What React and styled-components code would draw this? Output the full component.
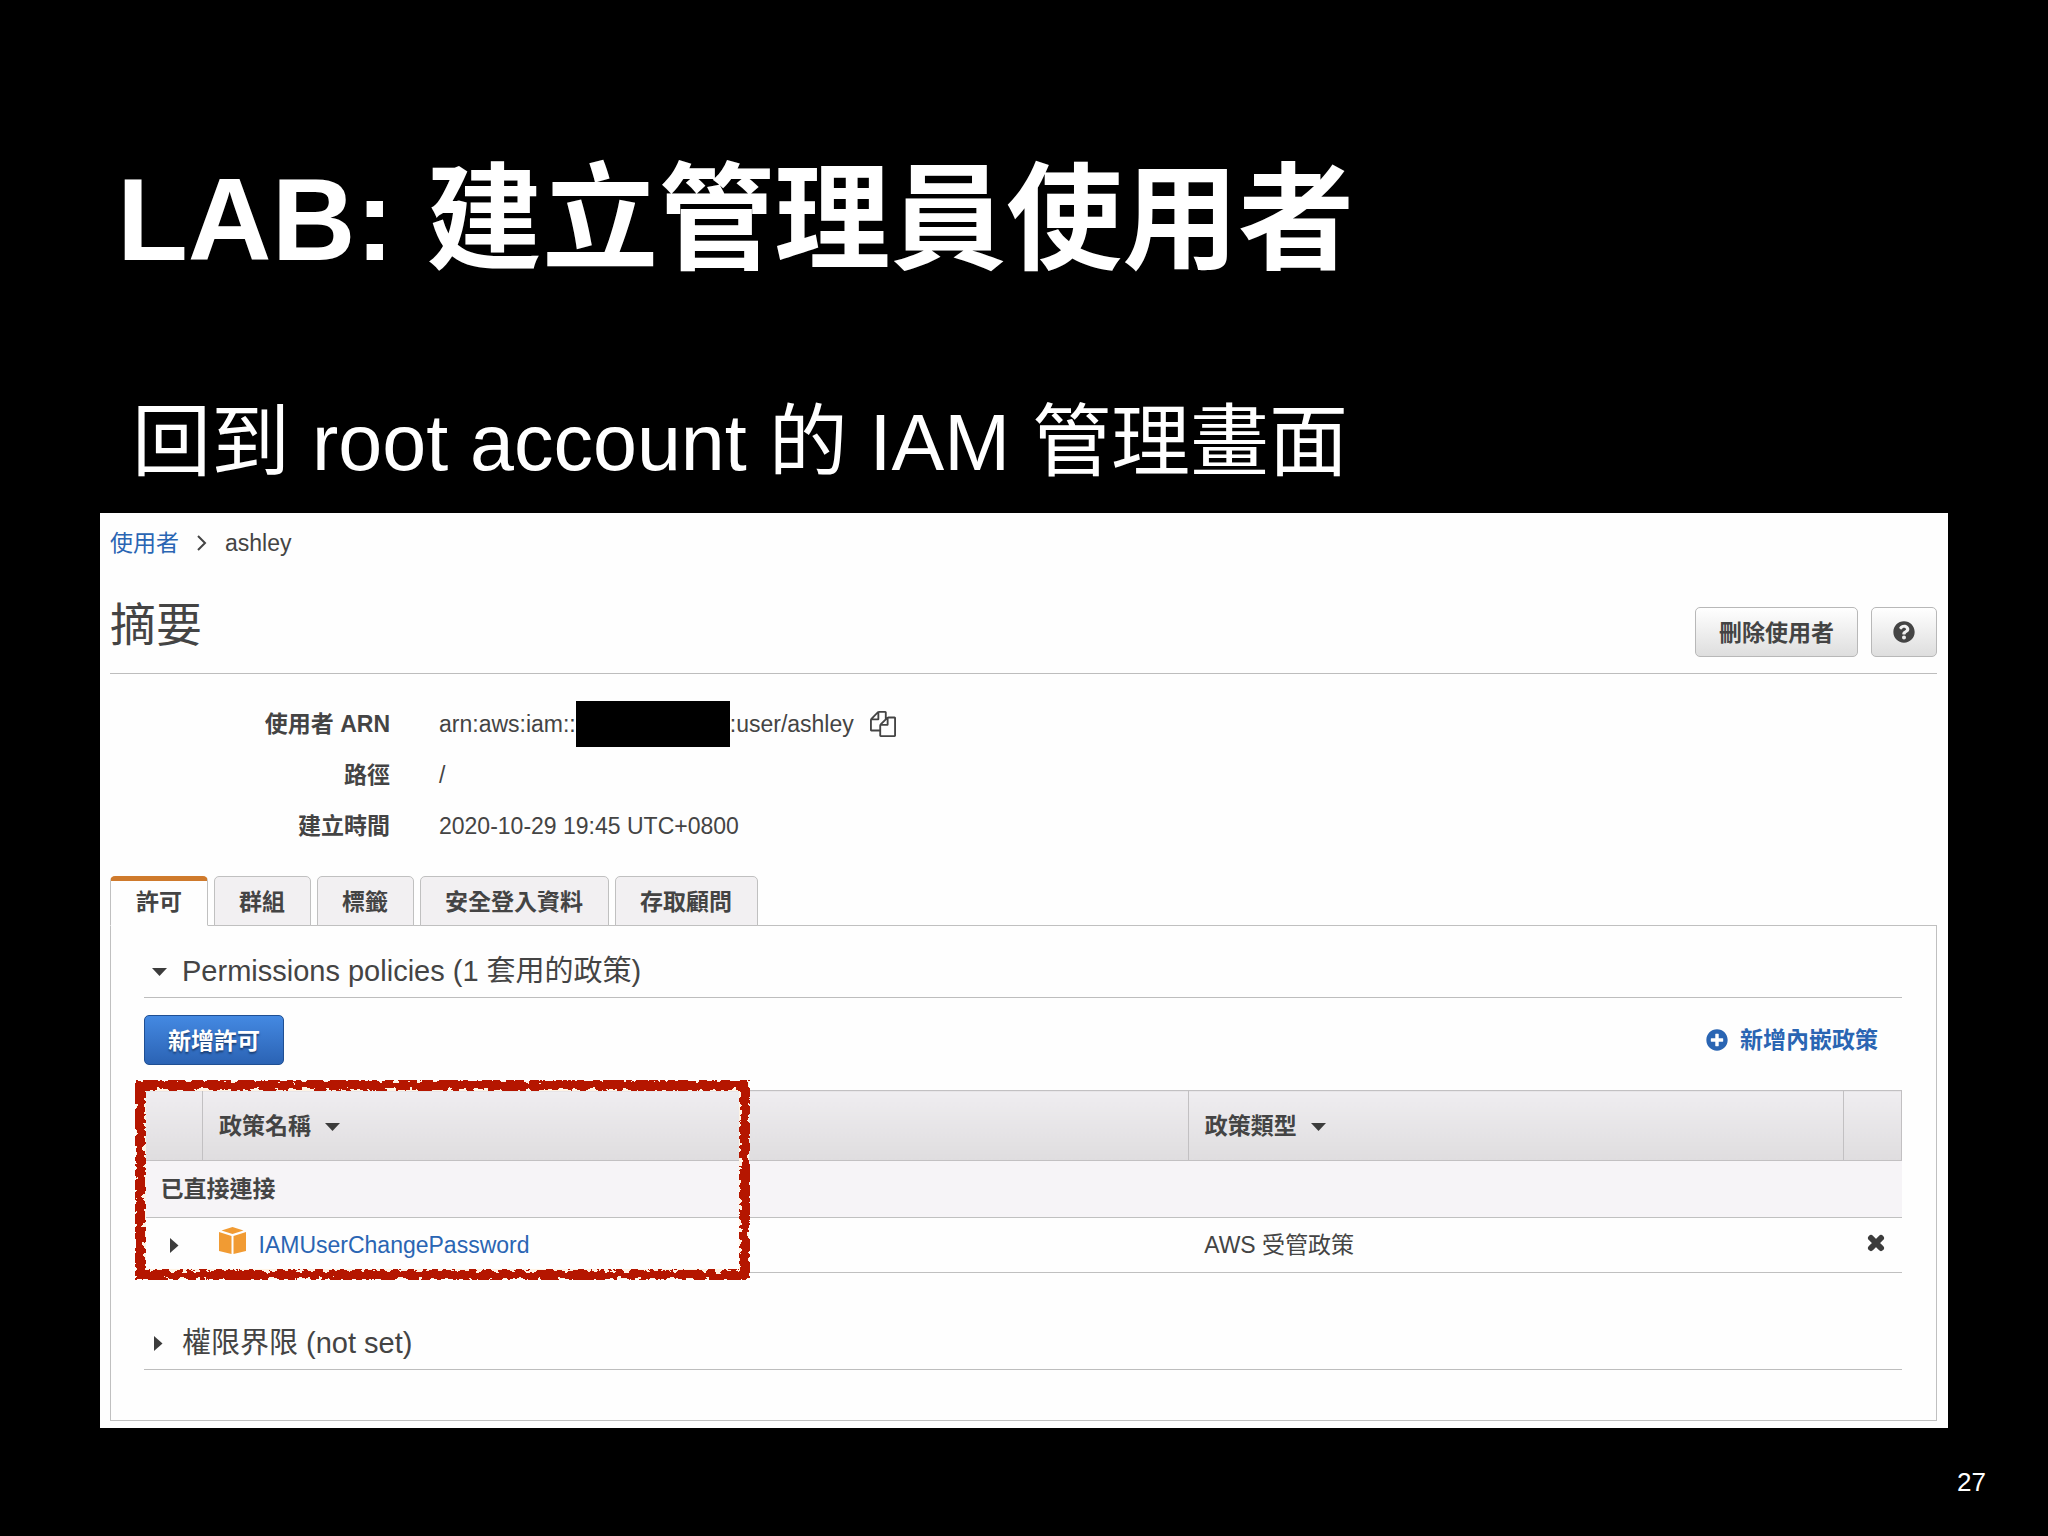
import React, { useState } from 'react'
import styled, { createGlobalStyle, css } from 'styled-components'
import { FaPlusCircle, FaQuestionCircle } from 'react-icons/fa'

const GlobalStyle = createGlobalStyle`
  * {
    box-sizing: border-box;
  }

  body {
    margin: 0;
    background-color: #000;
    font-family: 'Liberation Sans', 'Noto Sans CJK TC', sans-serif;
  }

  button {
    font-family: inherit;
    cursor: pointer;
  }
`

const Slide = styled.main`
  display: flex;
  flex-direction: column;
  min-height: 100vh;
  padding: 150px 100px 0;
  color: #fff;
`

const Title = styled.h1`
  margin: 0;
  padding-left: 17px;
  font-size: 116px;
  line-height: 140px;
  font-weight: 700;
`

const Subtitle = styled.p`
  margin: 103px 0 20px;
  padding-left: 32px;
  font-size: 79px;
  line-height: 100px;
`

const PageNumber = styled.footer`
  align-self: flex-end;
  margin: 39px -38px 0 0;
  font-size: 26px;
  line-height: 30px;
`

const Console = styled.section`
  padding: 13px 11px 7px 10px;
  background-color: #fefefe;
  color: #444;
  font-size: 23px;
  line-height: 34px;
`

const Breadcrumb = styled.nav`
  display: flex;
  align-items: center;
  gap: 17px;
`

const Link = styled.a`
  color: #2a65b3;
  text-decoration: none;
  font-weight: ${props => props.$bold ? 700 : 400};
`

const Header = styled.header`
  display: flex;
  align-items: center;
  justify-content: space-between;
  height: 114px;
  padding-top: 30px;
  border-bottom: 1px solid #bdbdbd;
`

const Heading = styled.h2`
  margin: 0 0 14px;
  font-size: 46px;
  line-height: 60px;
  font-weight: 400;
`

const HeaderActions = styled.div`
  display: flex;
  gap: 13px;
`

const Button = styled.button`
  display: flex;
  align-items: center;
  justify-content: center;
  height: 50px;
  padding: 2px 23px 0;
  border: 1px solid #b8b8b8;
  border-radius: 5px;
  background: linear-gradient(#fff, #dedede);
  color: #444;
  font-size: 23px;
  line-height: 34px;
  font-weight: 700;

  ${props => props.$icon && css`
    padding: 0 21px;
  `}

  ${props => props.$primary && css`
    border-color: #1f4f93;
    background: linear-gradient(#4489e2, #2b63b4);
    color: #fff;
    text-shadow: 0 2px 2px #1b3f73;
  `}
`

const Details = styled.dl`
  display: grid;
  grid-template-columns: 280px 1fr;
  grid-auto-rows: 51px;
  column-gap: 49px;
  align-items: center;
  margin: 0;
  padding: 24px 0 25px;
`

const Term = styled.dt`
  text-align: right;
  font-weight: 700;
`

const Value = styled.dd`
  display: flex;
  align-items: center;
  margin: 0;
`

const Redacted = styled.span`
  width: 154px;
  height: 46px;
  background-color: #000;
`

const IconButton = styled.button`
  display: inline-flex;
  padding: 0;
  border: none;
  background: none;
  color: #444;
`

const CopyButton = styled(IconButton)`
  margin-left: 16px;
`

const Tabs = styled.div`
  display: flex;
  gap: 6px;
  height: 50px;
  margin-bottom: -1px;
`

const Tab = styled.button`
  padding: 2px 25px 0 24px;
  border: 1px solid #c0c0c0;
  border-radius: 5px 5px 0 0;
  background-color: #f2f0f2;
  color: #444;
  font-size: 23px;
  line-height: 34px;
  font-weight: 700;

  ${props => props.$active && css`
    padding: 0 25px 2px;
    border-top: 5px solid #cf7a2c;
    border-bottom-color: #fefefe;
    background-color: #fefefe;
  `}
`

const Panel = styled.div`
  padding: 18px 34px 50px 33px;
  border: 1px solid #c0c0c0;
`

const SectionTitle = styled.h3`
  margin: 0;
  border-bottom: 1px solid #bdbdbd;
`

const SectionToggle = styled.button`
  display: flex;
  align-items: center;
  gap: 14px;
  height: 53px;
  padding: 0 0 0 8px;
  border: none;
  background: none;
  color: #444;
  font-size: 29px;
  line-height: 40px;
`

const Toolbar = styled.div`
  display: flex;
  align-items: center;
  justify-content: space-between;
  padding: 17px 24px 25px 0;
`

const InlinePolicyLink = styled(Link)`
  display: flex;
  align-items: center;
  gap: 12px;
`

const TableWrapper = styled.div`
  position: relative;
  margin-bottom: 43px;
`

const Table = styled.table`
  width: 100%;
  table-layout: fixed;
  border-collapse: collapse;
  text-align: left;
`

const HeadCell = styled.th`
  height: 70px;
  padding: 0 16px;
  border: 1px solid #c2c0c2;
  background: linear-gradient(#efedf0, #dfdddf);
`

const SortLabel = styled.span`
  display: flex;
  align-items: center;
  gap: 14px;
`

const GroupCell = styled.th`
  height: 57px;
  padding: 0 16px;
  border-bottom: 1px solid #c0c0c0;
  background-color: #f6f4f7;
`

const Cell = styled.td`
  height: 55px;
  padding: 0 16px;
  border-bottom: 1px solid #c0c0c0;
  text-align: ${props => props.$align || 'left'};
`

const ToggleCell = styled(Cell)`
  padding: 0 0 0 23px;
`

const PolicyName = styled.div`
  display: flex;
  align-items: center;
  gap: 12px;

  svg {
    margin-bottom: 8px;
  }
`

const Marker = styled.svg`
  position: absolute;
  top: -14px;
  left: -13px;
  width: 623px;
  height: 208px;
  pointer-events: none;
`

const tabs = ['許可', '群組', '標籤', '安全登入資料', '存取顧問']

const Chevron = () => (
  <svg width='12' height='16' viewBox='0 0 12 16' fill='none' stroke='#444' strokeWidth='2'>
    <path d='M2 1l7 7-7 7' />
  </svg>
)

const Caret = ({ open }) => (
  <svg width='16' height='16' viewBox='0 0 16 16' fill='#3c3c3c'>
    <path d={open ? 'M0 5h15l-7.5 8z' : 'M2 1l8.5 7.5-8.5 7.5z'} />
  </svg>
)

const CopyIcon = () => (
  <svg width='26' height='26' viewBox='0 0 1792 1792' fill='currentColor'>
    <path d='M1696 384q40 0 68 28t28 68v1216q0 40-28 68t-68 28h-960q-40 0-68-28t-28-68v-288h-544q-40 0-68-28t-28-68v-672q0-40 20-88t48-76l408-408q28-28 76-48t88-20h416q40 0 68 28t28 68v328q68-40 128-40h416zm-544 213l-299 299h299v-299zm-640-384l-299 299h299v-299zm196 647l316-316v-416h-384v416q0 40-28 68t-68 28h-416v640h512v-256q0-40 20-88t48-76zm956 804v-1152h-384v416q0 40-28 68t-68 28h-416v640h896z' />
  </svg>
)

const CubeIcon = () => (
  <svg width='28' height='28' viewBox='0 0 28 28' fill='#f19b33'>
    <path d='M13.500 0l11 3.500-11 3.500L2.500 3.500z' />
    <path d='M0 5l12.500 4v18L0 24z' />
    <path d='M27 5L14.500 9v18L27 24z' />
  </svg>
)

const RemoveIcon = () => (
  <svg width='20' height='20' viewBox='0 0 20 20' stroke='#3c3c3c' strokeWidth='6' strokeLinecap='round'>
    <path d='M5 5l10 10M15 5L5 15' />
  </svg>
)

// hand drawn chalk frame around the attached policy
const ChalkFrame = () => (
  <Marker viewBox='0 0 623 208' aria-hidden='true'>
    <defs>
      <filter id='chalk' x='0' y='0' width='623' height='208' filterUnits='userSpaceOnUse'>
        <feTurbulence type='fractalNoise' baseFrequency='0.13 0.18' numOctaves='3' seed='7' result='noise' />
        <feDisplacementMap in='SourceGraphic' in2='noise' scale='12' xChannelSelector='R' yChannelSelector='G' />
      </filter>
      <clipPath id='frame'>
        <path clipRule='evenodd' d='M4 4h615v200H4zM15 15v178h593V15z' />
      </clipPath>
    </defs>
    <g fill='none' clipPath='url(#frame)'>
      <rect x='10' y='10' width='603' height='188' stroke='#fff3e4' strokeWidth='10' />
      <g filter='url(#chalk)'>
        <rect x='9' y='9' width='605' height='190' stroke='#b51700' strokeWidth='10' />
      </g>
    </g>
  </Marker>
)

const App = () => {
  const [activeTab, setActiveTab] = useState(0)

  return (
    <Slide lang='zh-Hant'>
      <GlobalStyle />
      <Title>LAB: 建立管理員使用者</Title>
      <Subtitle>回到 root account 的 IAM 管理畫面</Subtitle>

      <Console>
        <Breadcrumb>
          <Link href='#users'>使用者</Link>
          <Chevron />
          <span>ashley</span>
        </Breadcrumb>

        <Header>
          <Heading>摘要</Heading>
          <HeaderActions>
            <Button>刪除使用者</Button>
            <Button $icon aria-label='Help'>
              <FaQuestionCircle size={22} />
            </Button>
          </HeaderActions>
        </Header>

        <Details>
          <Term>使用者 ARN</Term>
          <Value>
            <span>arn:aws:iam::</span>
            <Redacted />
            <span>:user/ashley</span>
            <CopyButton aria-label='Copy'>
              <CopyIcon />
            </CopyButton>
          </Value>
          <Term>路徑</Term>
          <Value>/</Value>
          <Term>建立時間</Term>
          <Value>2020-10-29 19:45 UTC+0800</Value>
        </Details>

        <Tabs role='tablist'>
          {
            tabs.map((tab, index) => (
              <Tab
                key={tab}
                role='tab'
                aria-selected={index === activeTab}
                $active={index === activeTab}
                onClick={() => setActiveTab(index)}
              >
                {tab}
              </Tab>
            ))
          }
        </Tabs>

        <Panel role='tabpanel'>
          <SectionTitle>
            <SectionToggle aria-expanded='true'>
              <Caret open />
              Permissions policies (1 套用的政策)
            </SectionToggle>
          </SectionTitle>

          <Toolbar>
            <Button $primary>新增許可</Button>
            <InlinePolicyLink href='#inline' $bold>
              <FaPlusCircle size={22} />
              新增內嵌政策
            </InlinePolicyLink>
          </Toolbar>

          <TableWrapper>
            <Table>
              <colgroup>
                <col width='58' />
                <col />
                <col width='37.3%' />
                <col width='58' />
              </colgroup>
              <thead>
                <tr>
                  <HeadCell />
                  <HeadCell>
                    <SortLabel>政策名稱 <Caret open /></SortLabel>
                  </HeadCell>
                  <HeadCell>
                    <SortLabel>政策類型 <Caret open /></SortLabel>
                  </HeadCell>
                  <HeadCell />
                </tr>
              </thead>
              <tbody>
                <tr>
                  <GroupCell colSpan={4}>已直接連接</GroupCell>
                </tr>
                <tr>
                  <ToggleCell>
                    <IconButton aria-label='Expand'>
                      <Caret />
                    </IconButton>
                  </ToggleCell>
                  <Cell>
                    <PolicyName>
                      <CubeIcon />
                      <Link href='#policy'>IAMUserChangePassword</Link>
                    </PolicyName>
                  </Cell>
                  <Cell>AWS 受管政策</Cell>
                  <Cell $align='right'>
                    <IconButton aria-label='Remove'>
                      <RemoveIcon />
                    </IconButton>
                  </Cell>
                </tr>
              </tbody>
            </Table>
            <ChalkFrame />
          </TableWrapper>

          <SectionTitle>
            <SectionToggle aria-expanded='false'>
              <Caret />
              權限界限 (not set)
            </SectionToggle>
          </SectionTitle>
        </Panel>
      </Console>

      <PageNumber>27</PageNumber>
    </Slide>
  )
}

export default App
